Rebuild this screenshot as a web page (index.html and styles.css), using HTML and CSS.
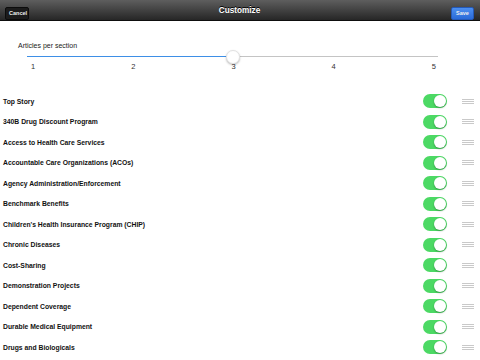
FILE: index.html
```html
<!doctype html>
<html lang="en">
  <head>
    <meta charset="utf-8">
    <title>Customize</title>
    <link rel="stylesheet" href="styles.css">
  </head>
  <body>

  <div class="navbar">
    <div class="nav-left"><span class="btn btn-dark">Cancel</span></div>
    <div class="nav-title">Customize</div>
    <div class="nav-right"><span class="btn btn-blue">Save</span></div>
  </div>

  <div class="slider">
    <div class="slider-label">Articles per section</div>
    <div class="slider-track">
      <div class="track-fill" style="width: 50%;"></div>
      <div class="track-thumb" style="left: 50%;"></div>
    </div>
    <div class="slider-ticks">
      <span>1</span><span>2</span><span>3</span><span>4</span><span>5</span>
    </div>
  </div>

  <div class="sections">
    <div class="row"><span class="row-name">Top Story</span><span class="toggle"></span><span class="grip"><i></i><i></i><i></i></span></div>
    <div class="row"><span class="row-name">340B Drug Discount Program</span><span class="toggle"></span><span class="grip"><i></i><i></i><i></i></span></div>
    <div class="row"><span class="row-name">Access to Health Care Services</span><span class="toggle"></span><span class="grip"><i></i><i></i><i></i></span></div>
    <div class="row"><span class="row-name">Accountable Care Organizations (ACOs)</span><span class="toggle"></span><span class="grip"><i></i><i></i><i></i></span></div>
    <div class="row"><span class="row-name">Agency Administration/Enforcement</span><span class="toggle"></span><span class="grip"><i></i><i></i><i></i></span></div>
    <div class="row"><span class="row-name">Benchmark Benefits</span><span class="toggle"></span><span class="grip"><i></i><i></i><i></i></span></div>
    <div class="row"><span class="row-name">Children's Health Insurance Program (CHIP)</span><span class="toggle"></span><span class="grip"><i></i><i></i><i></i></span></div>
    <div class="row"><span class="row-name">Chronic Diseases</span><span class="toggle"></span><span class="grip"><i></i><i></i><i></i></span></div>
    <div class="row"><span class="row-name">Cost-Sharing</span><span class="toggle"></span><span class="grip"><i></i><i></i><i></i></span></div>
    <div class="row"><span class="row-name">Demonstration Projects</span><span class="toggle"></span><span class="grip"><i></i><i></i><i></i></span></div>
    <div class="row"><span class="row-name">Dependent Coverage</span><span class="toggle"></span><span class="grip"><i></i><i></i><i></i></span></div>
    <div class="row"><span class="row-name">Durable Medical Equipment</span><span class="toggle"></span><span class="grip"><i></i><i></i><i></i></span></div>
    <div class="row"><span class="row-name">Drugs and Biologicals</span><span class="toggle"></span><span class="grip"><i></i><i></i><i></i></span></div>
  </div>

  </body>
</html>
```

FILE: styles.css
```css
body {
  margin: 0;
  background-color: #fff;
  font-family: "Liberation Sans", Arial, sans-serif;
  color: #111;
  overflow: hidden;
}

/* top bar */
.navbar {
  height: 20px;
  display: grid;
  grid-template-columns: 1fr auto 1fr;
  align-items: center;
  padding: 0 6px 0 5px;
  background: linear-gradient(#5e5e5e, #262626);
  border-bottom: 1px solid #0e0e0e;
}

.nav-title {
  color: #fff;
  font-weight: bold;
  font-size: 8.2px;
  text-shadow: 0 -1px 0 #000;
}

.nav-right {
  justify-self: end;
}

.btn {
  display: inline-block;
  height: 13px;
  line-height: 11px;
  padding: 0 3px;
  font-size: 5.5px;
  font-weight: bold;
  color: #eee;
  border-radius: 2px;
  box-sizing: border-box;
}

.btn-dark {
  width: 24px;
  text-align: center;
  background: #1c1c1c;
  border: 1px solid #0c0c0c;
}

.btn-blue {
  width: 23px;
  text-align: center;
  background: linear-gradient(#4c8ff0, #2a6ad8);
  border: 1px solid #2459b8;
}

/* slider */
.slider {
  margin-top: 20px;
}

.slider-label {
  padding-left: 18px;
  font-size: 7px;
  line-height: 10px;
  color: #222;
}

.slider-track {
  position: relative;
  margin-left: 27px;
  width: 411px;
  height: 11px;
  background: linear-gradient(transparent 5px, #c4c4c4 5px, #c4c4c4 6px, transparent 6px);
}

.track-fill {
  height: 11px;
  background: linear-gradient(transparent 5px, #3e8fe6 5px, #3e8fe6 6px, transparent 6px);
}

.track-thumb {
  position: absolute;
  top: -1px;
  width: 14px;
  height: 14px;
  margin-left: -7px;
  border-radius: 50%;
  background: #fff;
  box-sizing: border-box;
  border: 1px solid #e2e2e2;
  box-shadow: 0 1px 2px rgba(0,0,0,0.25);
}

.slider-ticks {
  display: flex;
  justify-content: space-between;
  margin-left: 31px;
  width: 405px;
  font-size: 7.5px;
  line-height: 10px;
  color: #333;
}

/* section list */
.sections {
  margin-top: 19px;
}

.row {
  display: flex;
  align-items: center;
  height: 20.5px;
  padding: 0 6px 0 3px;
}

.row-name {
  flex: 1;
  font-size: 6.8px;
  font-weight: bold;
  color: #111;
}

.toggle {
  position: relative;
  width: 24px;
  height: 14px;
  border-radius: 7px;
  background: #4cd964;
  margin-right: 15px;
}

.toggle::after {
  content: "";
  position: absolute;
  right: 1px;
  top: 1px;
  width: 12px;
  height: 12px;
  border-radius: 50%;
  background: #fff;
  box-shadow: 0 1px 2px rgba(0,0,0,0.3);
}

.grip {
  display: flex;
  flex-direction: column;
  gap: 1px;
  width: 12px;
}

.grip i {
  display: block;
  height: 1px;
  background: #c9c9c9;
}
```
